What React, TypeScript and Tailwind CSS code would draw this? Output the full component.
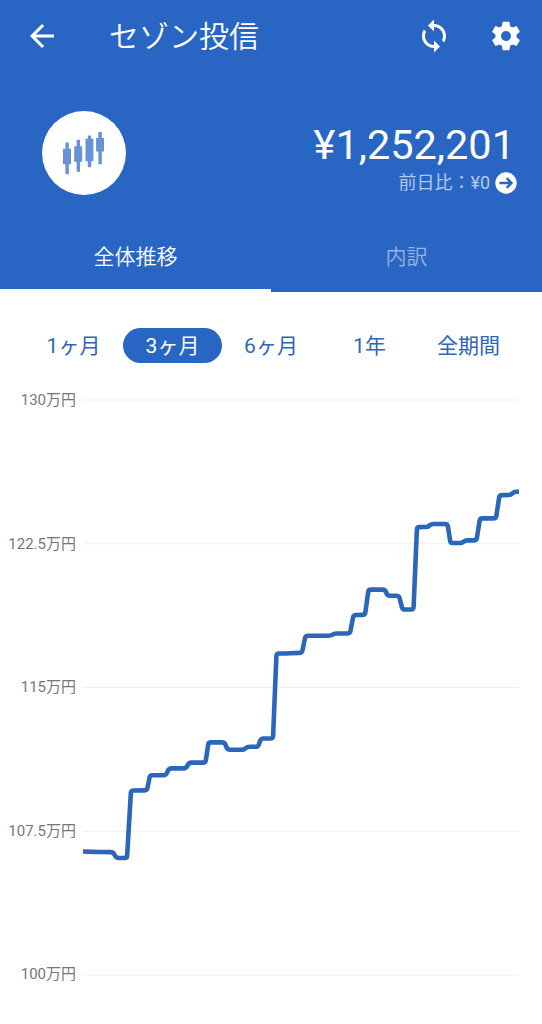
type Point = [number, number];

const LABELS = ["130万円", "122.5万円", "115万円", "107.5万円", "100万円"];
const GRID_LINES = [20, 163.75, 307.5, 451.25, 595];

const POINTS: Point[] = [
  [0, 471.5], [13, 472], [30, 472.2], [33.5, 478], [44, 478], [48, 410.5], [64, 410.3], [67, 395.2],
  [83, 395.2], [86, 388.4], [103, 388.4], [106, 382.6], [122.5, 382.6], [125.5, 362.4],
  [141.5, 362.4], [144.5, 369.8], [161, 369.8], [164, 366.8], [175, 366.8], [178, 358.5],
  [190, 358.5], [193.5, 273.6], [205, 273.4], [219, 272.8], [222.5, 255.7], [248, 255.7],
  [251, 253.6], [267, 253.4], [270.5, 235], [282, 234.8], [285.5, 209.6], [302, 209.6],
  [304.5, 215.8], [316, 215.8], [319.5, 229.5], [330.5, 229.5], [334, 147.2], [345, 147],
  [348, 144], [364.5, 144], [367.5, 163], [379, 163], [382, 160.4], [393.5, 160.4],
  [397, 138.4], [413, 138.4], [416.5, 115.2], [428, 115], [431, 111.8], [436, 111.8],
];

// Joins the points with straight runs and softens every corner.
function roundedPath(points: Point[], radius: number) {
  let d = `M${points[0][0]} ${points[0][1]}`;
  for (let i = 1; i < points.length - 1; i++) {
    const [px, py] = points[i - 1];
    const [x, y] = points[i];
    const [nx, ny] = points[i + 1];
    const before = Math.hypot(x - px, y - py);
    const after = Math.hypot(nx - x, ny - y);
    const a = Math.min(radius, before / 2) / before;
    const b = Math.min(radius, after / 2) / after;
    d += `L${x + (px - x) * a} ${y + (py - y) * a}Q${x} ${y} ${x + (nx - x) * b} ${y + (ny - y) * b}`;
  }
  const last = points[points.length - 1];
  return `${d}L${last[0]} ${last[1]}`;
}

function BackIcon() {
  return (
    <svg viewBox="0 0 24 24" className="h-9 w-9" fill="currentColor">
      <path d="M20 11H7.83l5.59-5.59L12 4l-8 8 8 8 1.41-1.41L7.83 13H20v-2z" />
    </svg>
  );
}

function SyncIcon() {
  return (
    <svg viewBox="0 0 24 24" className="h-9 w-9" fill="currentColor">
      <path d="M12 4V1L8 5l4 4V6c3.31 0 6 2.69 6 6 0 1.01-.25 1.97-.7 2.8l1.46 1.46C19.54 15.03 20 13.57 20 12c0-4.42-3.58-8-8-8zm0 14c-3.31 0-6-2.69-6-6 0-1.01.25-1.97.7-2.8L5.24 7.74C4.46 8.97 4 10.43 4 12c0 4.42 3.58 8 8 8v3l4-4-4-4v3z" />
    </svg>
  );
}

function GearIcon() {
  return (
    <svg viewBox="0 0 24 24" className="h-[34px] w-[34px]" fill="currentColor">
      <path d="M19.43 12.98c.04-.32.07-.64.07-.98s-.03-.66-.07-.98l2.11-1.65c.19-.15.24-.42.12-.64l-2-3.46c-.12-.22-.39-.3-.61-.22l-2.49 1c-.52-.4-1.08-.73-1.69-.98l-.38-2.65C14.46 2.18 14.25 2 14 2h-4c-.25 0-.46.18-.49.42l-.38 2.65c-.61.25-1.17.59-1.69.98l-2.49-1c-.23-.09-.49 0-.61.22l-2 3.46c-.13.22-.07.49.12.64l2.11 1.65c-.04.32-.07.65-.07.98s.03.66.07.98l-2.11 1.65c-.19.15-.24.42-.12.64l2 3.46c.12.22.39.3.61.22l2.49-1c.52.4 1.08.73 1.69.98l.38 2.65c.03.24.24.42.49.42h4c.25 0 .46-.18.49-.42l.38-2.65c.61-.25 1.17-.59 1.69-.98l2.49 1c.23.09.49 0 .61-.22l2-3.46c.12-.22.07-.49-.12-.64l-2.11-1.65zM12 15.5c-1.93 0-3.5-1.57-3.5-3.5s1.57-3.5 3.5-3.5 3.5 1.57 3.5 3.5-1.57 3.5-3.5 3.5z" />
    </svg>
  );
}

function CandlesIcon() {
  return (
    <svg viewBox="0 0 84 84" className="h-[84px] w-[84px]" fill="#6892d5">
      <path d="M23.4 31.5h3.4v6.3H29v15.4h-2.2v10h-3.4v-10h-2.4V37.8h2.4zM34.6 28.8H38v6.5h2.2v15.4H38v10h-3.4v-10h-2.4V35.3h2.4zM45.8 24.5h3.4v3.2h2.2v22.5h-2.2v6h-3.4v-6h-2.3V27.7h2.3zM56.4 21h3.4v6H62v13.6h-2.2v12.6h-3.4V40.6h-2.3V27h2.3z" />
    </svg>
  );
}

function ArrowBadge() {
  return (
    <svg viewBox="0 0 22 22" className="h-[22px] w-[22px]" fill="none">
      <circle cx="11" cy="11" r="10.7" fill="#fff" />
      <path d="M4.5 11H16M11.7 6.2l4.8 4.8-4.8 4.8" stroke="#2966c4" strokeWidth="2.4" />
    </svg>
  );
}

function Period({ label, active = false }: { label: string; active?: boolean }) {
  return (
    <button
      className={
        active
          ? "h-[35px] rounded-full bg-[#2966c4] pt-px text-white"
          : "h-[35px] rounded-full pt-px text-[#2f66b8]"
      }
    >
      {label}
    </button>
  );
}

export default function App() {
  return (
    <div className="flex h-[1024px] w-[542px] flex-col overflow-hidden bg-white font-[Roboto,'Noto_Sans_CJK_JP',sans-serif]">
      <header className="flex h-[292px] flex-col bg-[#2966c4] text-white">
        <div className="flex h-[72px] items-center pr-[19px] pl-6">
          <BackIcon />
          <h1 className="mt-0.5 ml-[49px] flex-1 text-[30px] leading-9 font-[350]">セゾン投信</h1>
          <SyncIcon />
          <span className="ml-[37px]">
            <GearIcon />
          </span>
        </div>
        <div className="flex h-[148px] items-start justify-between pr-[25px] pl-[42px]">
          <div className="mt-[39px] rounded-full bg-white">
            <CandlesIcon />
          </div>
          <div className="mt-[48px] flex flex-col items-end">
            <div className="mr-[2px] text-[41.5px] leading-[50px]">¥1,252,201</div>
            <div className="mt-px flex h-6 items-center gap-[5px] text-[18px] leading-6">
              <span className="text-[#b2c8ea]">前日比：¥0</span>
              <ArrowBadge />
            </div>
          </div>
        </div>
        <nav className="grid flex-1 grid-cols-2 text-center text-[21px] font-[350]">
          <div className="border-b-[3.5px] border-white pt-[21px] leading-8">全体推移</div>
          <div className="pt-[21px] leading-8 text-[#94b2e1]">内訳</div>
        </nav>
      </header>
      <div className="mt-9 grid grid-cols-[99px_99px_98px_99px_99px] justify-center text-[21px] leading-[34px]">
        <Period label="1ヶ月" />
        <Period label="3ヶ月" active />
        <Period label="6ヶ月" />
        <Period label="1年" />
        <Period label="全期間" />
      </div>
      <main className="mt-[17px] flex">
        <div className="mt-[8px] flex h-[598px] w-[76px] shrink-0 flex-col justify-between text-right text-[15px] leading-6 text-[#777]">
          {LABELS.map((label) => (
            <div key={label} className="whitespace-nowrap">{label}</div>
          ))}
        </div>
        <svg viewBox="0 0 436 620" className="ml-[7px] h-[620px] w-[436px]" fill="none">
          {GRID_LINES.map((y) => (
            <path key={y} d={`M0 ${y}H436`} stroke="#eeeff0" strokeWidth="1" />
          ))}
          <path d={roundedPath(POINTS, 2.5)} stroke="#2b66bb" strokeWidth="4.6" strokeLinejoin="round" />
        </svg>
      </main>
    </div>
  );
}
